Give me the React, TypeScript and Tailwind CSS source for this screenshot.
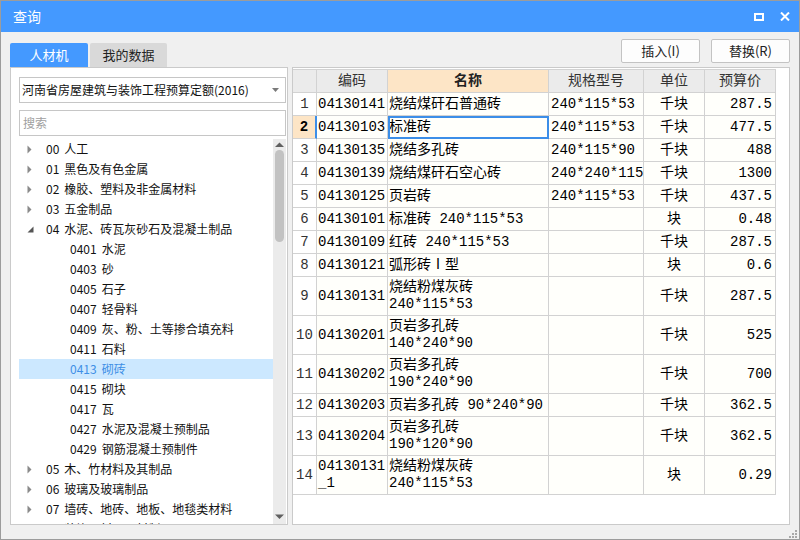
import React from 'react';

type Row = {
  n: number;
  code: string[];
  name: string[];
  spec: string;
  unit: string;
  price: string;
};

const rows: Row[] = [
  { n: 1, code: ['04130141'], name: ['烧结煤矸石普通砖'], spec: '240*115*53', unit: '千块', price: '287.5' },
  { n: 2, code: ['04130103'], name: ['标准砖'], spec: '240*115*53', unit: '千块', price: '477.5' },
  { n: 3, code: ['04130135'], name: ['烧结多孔砖'], spec: '240*115*90', unit: '千块', price: '488' },
  { n: 4, code: ['04130139'], name: ['烧结煤矸石空心砖'], spec: '240*240*115', unit: '千块', price: '1300' },
  { n: 5, code: ['04130125'], name: ['页岩砖'], spec: '240*115*53', unit: '千块', price: '437.5' },
  { n: 6, code: ['04130101'], name: ['标准砖 240*115*53'], spec: '', unit: '块', price: '0.48' },
  { n: 7, code: ['04130109'], name: ['红砖 240*115*53'], spec: '', unit: '千块', price: '287.5' },
  { n: 8, code: ['04130121'], name: ['弧形砖Ⅰ型'], spec: '', unit: '块', price: '0.6' },
  { n: 9, code: ['04130131'], name: ['烧结粉煤灰砖', '240*115*53'], spec: '', unit: '千块', price: '287.5' },
  { n: 10, code: ['04130201'], name: ['页岩多孔砖', '140*240*90'], spec: '', unit: '千块', price: '525' },
  { n: 11, code: ['04130202'], name: ['页岩多孔砖', '190*240*90'], spec: '', unit: '千块', price: '700' },
  { n: 12, code: ['04130203'], name: ['页岩多孔砖 90*240*90'], spec: '', unit: '千块', price: '362.5' },
  { n: 13, code: ['04130204'], name: ['页岩多孔砖', '190*120*90'], spec: '', unit: '千块', price: '362.5' },
  { n: 14, code: ['04130131', '_1'], name: ['烧结粉煤灰砖', '240*115*53'], spec: '', unit: '块', price: '0.29' },
];

type TreeItem = { code: string; label: string; level: 0 | 1; state?: 'open' | 'closed'; selected?: boolean };

const tree: TreeItem[] = [
  { code: '00', label: '人工', level: 0, state: 'closed' },
  { code: '01', label: '黑色及有色金属', level: 0, state: 'closed' },
  { code: '02', label: '橡胶、塑料及非金属材料', level: 0, state: 'closed' },
  { code: '03', label: '五金制品', level: 0, state: 'closed' },
  { code: '04', label: '水泥、砖瓦灰砂石及混凝土制品', level: 0, state: 'open' },
  { code: '0401', label: '水泥', level: 1 },
  { code: '0403', label: '砂', level: 1 },
  { code: '0405', label: '石子', level: 1 },
  { code: '0407', label: '轻骨料', level: 1 },
  { code: '0409', label: '灰、粉、土等掺合填充料', level: 1 },
  { code: '0411', label: '石料', level: 1 },
  { code: '0413', label: '砌砖', level: 1, selected: true },
  { code: '0415', label: '砌块', level: 1 },
  { code: '0417', label: '瓦', level: 1 },
  { code: '0427', label: '水泥及混凝土预制品', level: 1 },
  { code: '0429', label: '钢筋混凝土预制件', level: 1 },
  { code: '05', label: '木、竹材料及其制品', level: 0, state: 'closed' },
  { code: '06', label: '玻璃及玻璃制品', level: 0, state: 'closed' },
  { code: '07', label: '墙砖、地砖、地板、地毯类材料', level: 0, state: 'closed' },
  { code: '08', label: '装饰石材及石材制品', level: 0, state: 'closed' },
];

const ui = "font-['Noto_Sans_CJK_SC',sans-serif]";
const grid = "font-['Liberation_Mono','Noto_Sans_CJK_SC',monospace]";

function TreeRow({ item }: { item: TreeItem }) {
  return (
    <div
      className={`flex items-center h-[20px] shrink-0 text-[12px] whitespace-nowrap ${
        item.selected ? 'bg-[#cce8ff] text-[#3d8fe6]' : 'text-[#111]'
      } ${item.level === 1 ? 'pl-[51px]' : ''}`}
    >
      {item.level === 0 && (
        <div className="w-[27px] pl-[8px] flex items-center">
          {item.state === 'closed' ? (
            <svg width="5" height="9" viewBox="0 0 5 9">
              <polygon points="0.5,0.5 4.5,4.5 0.5,8.5" fill="#8a8a8a" />
            </svg>
          ) : (
            <svg width="7" height="7" viewBox="0 0 7 7">
              <polygon points="6.5,0.5 6.5,6.5 0.5,6.5" fill="#555555" />
            </svg>
          )}
        </div>
      )}
      <span>{item.code}</span>
      <span className="ml-[5px]">{item.label}</span>
    </div>
  );
}

function Lines({ lines }: { lines: string[] }) {
  return (
    <div className="flex flex-col leading-[17px]">
      {lines.map((l, i) => (
        <span key={i} className="whitespace-pre">{l}</span>
      ))}
    </div>
  );
}

export default function App() {
  return (
    <div className={`w-[800px] h-[540px] border border-[#9c9c9c] bg-[#f0f0f0] flex flex-col ${ui}`}>
      {/* title bar */}
      <div className="h-[31px] shrink-0 bg-[#4499ff] flex items-center justify-between pl-[12px] pr-[9px] text-white">
        <span className="text-[14px]">查询</span>
        <div className="flex items-center gap-[16px]">
          <svg width="10" height="8" viewBox="0 0 10 8">
            <rect x="1" y="1" width="8" height="6" fill="none" stroke="#fff" strokeWidth="2" />
          </svg>
          <svg width="10" height="9" viewBox="0 0 10 9">
            <path d="M1 0.5 L9 8.5 M9 0.5 L1 8.5" stroke="#fff" strokeWidth="2" />
          </svg>
        </div>
      </div>

      <div className="flex-1 flex flex-col pt-[7px] px-[9px]">
        {/* tabs + buttons */}
        <div className="h-[28px] shrink-0 flex justify-between">
          <div className="flex items-end gap-[2px]">
            <div className="w-[78px] h-[24px] bg-[#4499ff] text-white text-[13px] flex items-center justify-center rounded-t-[2px]">
              人材机
            </div>
            <div className="w-[77px] h-[24px] bg-[#d9d9d9] text-[#222] text-[13px] flex items-center justify-center rounded-t-[2px]">
              我的数据
            </div>
          </div>
          <div className="flex items-start gap-[11px]">
            <button className="w-[79px] h-[24px] bg-[#fdfdfd] border border-[#c3c3c3] rounded-[2px] text-[13px] text-[#222]">
              插入(I)
            </button>
            <button className="w-[79px] h-[24px] bg-[#fdfdfd] border border-[#c3c3c3] rounded-[2px] text-[13px] text-[#222]">
              替换(R)
            </button>
          </div>
        </div>

        {/* panels */}
        <div className="h-[458px] shrink-0 flex gap-[4px]">
          {/* left */}
          <div className="w-[278px] bg-white border border-[#cacaca] pl-[8px] pr-[1px] pt-[9px] flex flex-col">
            <div className="h-[26px] shrink-0 border border-[#c6c6c6] flex items-center justify-between pl-[2px] pr-[6px] text-[12px] text-[#111]">
              <span>河南省房屋建筑与装饰工程预算定额(2016)</span>
              <svg width="7" height="4" viewBox="0 0 7 4">
                <polygon points="0,0 7,0 3.5,4" fill="#7a7a7a" />
              </svg>
            </div>
            <div className="h-[26px] mt-[7px] shrink-0 border border-[#c6c6c6] flex items-center pl-[3px] text-[12px] text-[#a0a0a0]">
              搜索
            </div>
            <div className="mt-[3px] flex-1 flex min-h-0">
              <div className="flex-1 flex flex-col overflow-hidden">
                {tree.map((t, i) => (
                  <TreeRow key={i} item={t} />
                ))}
              </div>
              <div className="w-[13px] bg-[#ebebeb] flex flex-col items-center">
                <svg width="9" height="6" viewBox="0 0 9 6" className="mt-[3px]">
                  <polygon points="0,5 9,5 4.5,0.5" fill="#606060" />
                </svg>
                <div className="w-[9px] h-[92px] mt-[2px] rounded-[5px] bg-[#c2c2c2]" />
                <div className="flex-1" />
                <svg width="9" height="6" viewBox="0 0 9 6" className="mb-[4px]">
                  <polygon points="0,0.5 9,0.5 4.5,5" fill="#606060" />
                </svg>
              </div>
            </div>
          </div>

          {/* right */}
          <div className="w-[498px] bg-white border border-[#cacaca] pt-[1px]">
            <div className={`grid grid-cols-[24px_71px_161px_95px_61px_71px] w-[483px] border-t border-[#d2d2d2] text-[14px] text-black ${grid}`}>
              <div className="h-[23px] bg-[#ebebeb] border-r border-b border-[#d2d2d2]" />
              <div className="h-[23px] bg-[#ebebeb] border-r border-b border-[#d2d2d2] flex items-center justify-center text-[#333]">编码</div>
              <div className="h-[23px] bg-[#fde5c6] border-r border-b border-[#d2d2d2] flex items-center justify-center font-bold text-[#222]">名称</div>
              <div className="h-[23px] bg-[#ebebeb] border-r border-b border-[#d2d2d2] flex items-center justify-center text-[#333]">规格型号</div>
              <div className="h-[23px] bg-[#ebebeb] border-r border-b border-[#d2d2d2] flex items-center justify-center text-[#333]">单位</div>
              <div className="h-[23px] bg-[#ebebeb] border-r border-b border-[#d2d2d2] flex items-center justify-center text-[#333]">预算价</div>

              {rows.map((r) => {
                const h = r.name.length > 1 || r.code.length > 1 ? 'h-[39px]' : 'h-[23px]';
                const sel = r.n === 2;
                return (
                  <React.Fragment key={r.n}>
                    <div
                      className={`${h} border-b flex items-center justify-center ${
                        sel
                          ? 'bg-[#fde5c6] border-r-2 border-r-[#3c8ee8] border-b-[#d2d2d2] font-bold'
                          : 'bg-white border-r border-[#d2d2d2] text-[#333]'
                      }`}
                    >
                      {r.n}
                    </div>
                    <div className={`${h} bg-[#fffffb] border-r border-b border-[#d2d2d2] flex items-center pl-[1px]`}>
                      <Lines lines={r.code} />
                    </div>
                    <div
                      className={`${h} bg-[#fffffb] border-r border-b border-[#d2d2d2] flex items-center pl-[1px] ${
                        sel ? 'outline-2 outline-[#3c8ee8] -outline-offset-2' : ''
                      }`}
                    >
                      <Lines lines={r.name} />
                    </div>
                    <div className={`${h} bg-[#fffffb] border-r border-b border-[#d2d2d2] flex items-center pl-[2px]`}>
                      {r.spec}
                    </div>
                    <div className={`${h} bg-[#fffffb] border-r border-b border-[#d2d2d2] flex items-center justify-center`}>
                      {r.unit}
                    </div>
                    <div className={`${h} bg-[#fffffb] border-r border-b border-[#d2d2d2] flex items-center justify-end pr-[3px]`}>
                      {r.price}
                    </div>
                  </React.Fragment>
                );
              })}
            </div>
          </div>
        </div>

        {/* bottom strip with resize grip */}
        <div className="flex-1 flex justify-end items-end">
          <svg width="8" height="8" viewBox="0 0 8 8" className="-mr-[7px] mb-[1px]">
            <rect x="6" y="0" width="2" height="2" fill="#a8a8a8" />
            <rect x="3" y="3" width="2" height="2" fill="#a8a8a8" />
            <rect x="6" y="3" width="2" height="2" fill="#a8a8a8" />
            <rect x="0" y="6" width="2" height="2" fill="#a8a8a8" />
            <rect x="3" y="6" width="2" height="2" fill="#a8a8a8" />
            <rect x="6" y="6" width="2" height="2" fill="#a8a8a8" />
          </svg>
        </div>
      </div>
    </div>
  );
}
